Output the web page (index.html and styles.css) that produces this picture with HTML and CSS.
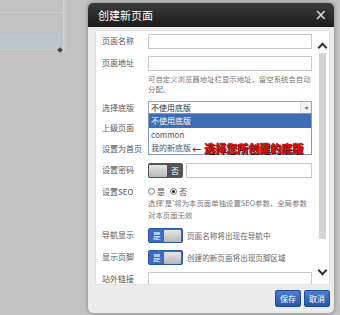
FILE: index.html
```html
<!DOCTYPE html>
<html>
<head>
  <title>创建新页面</title>
  <link rel="stylesheet" href="styles.css">
</head>
<body>

<div class="page">
  <div class="bg-panel">
    <div class="bg-line"></div>
    <div class="bg-field"></div>
    <span class="bg-grip"></span>
  </div>
</div>

<div class="dialog">
  <div class="dialog-head">
    <span class="dialog-title">创建新页面</span>
    <span class="dialog-close">&times;</span>
  </div>

  <div class="dialog-body">
    <div class="panel">
      <div class="form">
        <div class="row">
          <label class="label">页面名称</label>
          <div class="field"><input class="text" type="text"></div>
        </div>
        <div class="row">
          <label class="label">页面地址</label>
          <div class="field">
            <input class="text" type="text">
            <p class="help">可自定义浏览器地址栏显示地址，留空系统会自动分配。</p>
          </div>
        </div>
        <div class="row row-select">
          <label class="label">选择底版</label>
          <div class="field">
            <div class="select"><span>不使用底版</span><span class="select-btn">&#9662;</span></div>
          </div>
        </div>
        <div class="row">
          <label class="label">上级页面</label>
          <div class="field"><div class="select"></div></div>
        </div>
        <div class="row">
          <label class="label">设置为首页</label>
          <div class="field"></div>
        </div>
        <div class="row">
          <label class="label">设置密码</label>
          <div class="field inline">
            <span class="toggle off"><span class="knob"></span><span class="toggle-text">否</span></span>
            <input class="text short" type="text">
          </div>
        </div>
        <div class="row">
          <label class="label">设置SEO</label>
          <div class="field">
            <div class="radios">
              <span class="radio"></span>是
              <span class="radio checked"></span>否
            </div>
            <p class="help seo">选择'是'将为本页面单独设置SEO参数，全局参数对本页面无效</p>
          </div>
        </div>
        <div class="row">
          <label class="label">导航显示</label>
          <div class="field inline">
            <span class="toggle on"><span class="toggle-text">是</span><span class="knob"></span></span>
            <span class="note">页面名称将出现在导航中</span>
          </div>
        </div>
        <div class="row">
          <label class="label">显示页脚</label>
          <div class="field inline">
            <span class="toggle on"><span class="toggle-text">是</span><span class="knob"></span></span>
            <span class="note">创建的新页面将出现页脚区域</span>
          </div>
        </div>
        <div class="row">
          <label class="label">站外链接</label>
          <div class="field">
            <input class="text" type="text">
          </div>
        </div>

        <ul class="dropdown">
          <li class="active">不使用底版</li>
          <li>common</li>
          <li>我的新底版</li>
        </ul>
        <div class="callout"><span class="arrow">&larr;</span>选择您所创建的底版</div>
      </div>

      <div class="scrollbar">
        <span class="chev up"></span>
        <span class="track"></span>
        <span class="chev down"></span>
      </div>
    </div>
  </div>

  <div class="dialog-foot">
    <button class="btn">保存</button>
    <button class="btn">取消</button>
  </div>
</div>

</body>
</html>
```

FILE: styles.css
```css
body {
  margin: 0;
  padding: 0;
  width: 340px;
  height: 315px;
  overflow: hidden;
  background: #c2c2c2;
  font-family: "Noto Sans CJK SC", "Liberation Sans", sans-serif;
}

.bg-panel {
  position: relative;
  width: 63px;
  height: 52px;
  border-right: 1px solid #d2d2d2;
  box-shadow: 2px 0 0 #c9c9c9;
}
.bg-line {
  height: 12px;
  border-bottom: 1px solid #cdcdcd;
}
.bg-field {
  margin-top: 21px;
  width: 61px;
  height: 15px;
  background: #bcc7ce;
  border-bottom: 1px solid #cbcbcb;
}
.bg-grip {
  position: absolute;
  right: 1px;
  bottom: 0;
  width: 4px;
  height: 4px;
  background: #444;
  transform: rotate(45deg);
}

.dialog {
  position: absolute;
  left: 88px;
  top: 3px;
  width: 246px;
  height: 310px;
  background: #ececec;
  border-radius: 5px;
  box-shadow: 0 0 4px rgba(0, 0, 0, 0.35);
  display: flex;
  flex-direction: column;
}

.dialog-head {
  height: 24px;
  border-radius: 5px 5px 0 0;
  background: linear-gradient(#3b3b3b, #1c1c1c);
  display: flex;
  align-items: center;
  justify-content: space-between;
  padding: 0 7px 0 10px;
  color: #fff;
}
.dialog-title {
  font-size: 11px;
}
.dialog-close {
  font-family: "DejaVu Sans", sans-serif;
  font-size: 15px;
  line-height: 1;
  color: #ddd;
}

.dialog-body {
  padding: 3px 4px 0 7px;
}

.panel {
  position: relative;
  height: 255px;
  background: #fff;
  border: 1px solid #e2e2e2;
  box-sizing: border-box;
  display: flex;
  overflow: hidden;
}

.form {
  width: 221px;
  padding: 3px 0 0 6px;
  box-sizing: border-box;
}

.row {
  display: flex;
  margin-bottom: 7px;
  font-size: 8px;
  color: #555;
}
.label {
  width: 46px;
  flex: none;
  line-height: 14px;
  white-space: nowrap;
}
.field {
  width: 164px;
  min-height: 14px;
}
.field.inline {
  display: flex;
  align-items: center;
}

.text {
  display: block;
  width: 164px;
  height: 15px;
  margin: 0;
  border: 1px solid #c8c8c8;
  box-sizing: border-box;
  background: #fff;
  padding: 0;
}
.text.short {
  width: 126px;
  margin-left: 3px;
}

.help {
  margin: 3px 0 0;
  font-size: 7.4px;
  line-height: 10px;
  color: #777;
}
.help.seo {
  margin-top: 1px;
  line-height: 12px;
}

.row-select {
  margin-bottom: 6px;
}
.select {
  height: 13px;
  border: 1px solid #a9a9a9;
  box-sizing: border-box;
  display: flex;
  justify-content: space-between;
  align-items: center;
  padding-left: 2px;
  color: #333;
  line-height: 11px;
}
.select-btn {
  width: 10px;
  height: 11px;
  border-left: 1px solid #ddd;
  background: #f2f2f2;
  text-align: center;
  font-size: 6px;
  color: #555;
}

.dropdown {
  position: absolute;
  left: 52px;
  top: 82px;
  width: 164px;
  margin: 0;
  padding: 0;
  list-style: none;
  background: #fff;
  border: 1px solid #7f9ab8;
  box-sizing: border-box;
  font-size: 8px;
  color: #555;
}
.dropdown li {
  height: 13px;
  line-height: 13px;
  padding-left: 2px;
}
.dropdown li.active {
  height: 14px;
  line-height: 14px;
  background: #3e6db5;
  color: #fff;
}

.callout {
  position: absolute;
  left: 96px;
  top: 109px;
  font-size: 11px;
  line-height: 16px;
  font-weight: bold;
  color: #e01010;
  text-shadow: 0 0 1px #500, 1px 1px 0 #400;
  white-space: nowrap;
}
.callout .arrow {
  font-family: "DejaVu Sans", sans-serif;
  font-weight: normal;
  margin-right: 3px;
  text-shadow: none;
}

.toggle {
  flex: none;
  width: 35px;
  height: 15px;
  border-radius: 2px;
  box-sizing: border-box;
  display: flex;
  align-items: center;
  justify-content: space-between;
  padding: 1px;
  color: #fff;
  font-size: 8px;
}
.toggle.off {
  background: #555;
}
.toggle.on {
  background: #3b6bc6;
  border: 1px solid #2a55a5;
}
.toggle-text {
  width: 14px;
  text-align: center;
}
.knob {
  width: 18px;
  height: 12px;
  border-radius: 1px;
  background: linear-gradient(#e6e6e6, #b7b7b7);
}
.note {
  margin-left: 4px;
  color: #666;
  font-size: 7.6px;
  white-space: nowrap;
}

.radios {
  display: flex;
  align-items: center;
  height: 10px;
  margin-top: 1px;
  color: #555;
}
.radio {
  width: 7px;
  height: 7px;
  border: 1px solid #777;
  border-radius: 50%;
  box-sizing: border-box;
  margin-right: 2px;
  position: relative;
}
.radio.checked {
  margin-left: 5px;
}
.radio.checked::after {
  content: "";
  position: absolute;
  left: 1px;
  top: 1px;
  width: 3px;
  height: 3px;
  border-radius: 50%;
  background: #111;
}

.scrollbar {
  width: 14px;
  display: flex;
  flex-direction: column;
  align-items: center;
  padding-top: 13px;
}
.chev {
  width: 5px;
  height: 5px;
  border-left: 2px solid #333;
  border-top: 2px solid #333;
}
.chev.up {
  transform: rotate(45deg);
}
.chev.down {
  transform: rotate(225deg);
  margin-top: 28px;
}
.track {
  width: 7px;
  height: 186px;
  margin-top: 2px;
  background: #d4d4d4;
}

.dialog-foot {
  flex: 1;
  display: flex;
  justify-content: flex-end;
  align-items: flex-start;
  padding: 5px 4px 0 0;
  gap: 3px;
}
.btn {
  width: 26px;
  height: 17px;
  padding: 0;
  border: 1px solid #1f4c96;
  border-radius: 2px;
  background: linear-gradient(#4b7fd0, #2656a8);
  color: #fff;
  font-family: "Noto Sans CJK SC", sans-serif;
  font-size: 8px;
}
```
